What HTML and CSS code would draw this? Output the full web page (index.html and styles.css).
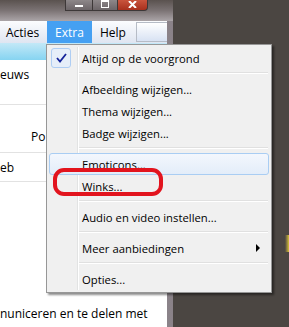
FILE: index.html
```html
<!DOCTYPE html>
<html lang="nl">
<head>
    <meta charset="UTF-8">
    <title>Extra menu</title>
    <link rel="stylesheet" href="styles.css">
</head>
<body>
    <div class="window">
        <div class="titlebar">
            <div class="caption">
                <span class="cbtn min"><i></i></span>
                <span class="cbtn max"><i></i></span>
                <span class="cbtn close">
                    <svg width="9" height="7" viewBox="0 0 9 7"><path d="M1 0 L8 7 M8 0 L1 7" stroke="#fff" stroke-width="2"/></svg>
                </span>
            </div>
        </div>
        <div class="client">
            <div class="menubar">
                <span class="mitem first">Acties</span>
                <span class="mitem open">Extra</span>
                <span class="mitem">Help</span>
                <span class="searchbox"></span>
            </div>
            <div class="band"></div>
            <div class="row r1">euws</div>
            <div class="row r2">Po</div>
            <div class="row r3">eb</div>
            <div class="filler"></div>
            <div class="footer-text">nuniceren en te delen met</div>
        </div>
    </div>

    <div class="glow"></div>

    <div class="menu">
        <div class="item">
            <span class="icon checked">
                <svg width="11" height="10" viewBox="0 0 11 10"><path d="M1 5 L4 8.5 L10 1" fill="none" stroke="#15239a" stroke-width="1.8"/></svg>
            </span>
            <span class="label">Altijd op de voorgrond</span>
        </div>
        <div class="sep"></div>
        <div class="item"><span class="icon"></span><span class="label">Afbeelding wijzigen...</span></div>
        <div class="item"><span class="icon"></span><span class="label">Thema wijzigen...</span></div>
        <div class="item"><span class="icon"></span><span class="label">Badge wijzigen...</span></div>
        <div class="sep"></div>
        <div class="item hover"><span class="icon"></span><span class="label">Emoticons...</span></div>
        <div class="item"><span class="icon"></span><span class="label">Winks...</span></div>
        <div class="sep"></div>
        <div class="item"><span class="icon"></span><span class="label">Audio en video instellen...</span></div>
        <div class="sep"></div>
        <div class="item"><span class="icon"></span><span class="label">Meer aanbiedingen</span><span class="arrow"></span></div>
        <div class="sep"></div>
        <div class="item"><span class="icon"></span><span class="label">Opties...</span></div>
    </div>

    <div class="mark"></div>
</body>
</html>
```

FILE: styles.css
```css
body { margin: 0; width: 289px; height: 327px; overflow: hidden; position: relative; background: #4b4642; font-family: "Open Sans", "DejaVu Sans", sans-serif; font-size: 11.3px; color: #000; }

.window { width: 173px; height: 327px; display: flex; flex-direction: column; background: linear-gradient(90deg, #a8a1a6, #8a8288); }
.titlebar { height: 21px; flex: none; background: linear-gradient(#5a524f, #7b7374 50%, #aba5a8); }
.caption { display: flex; margin-left: 65px; height: 11px; }
.cbtn { height: 11px; box-sizing: border-box; border: 1px solid #3d3838; border-top: none; display: flex; align-items: center; justify-content: center; }
.min, .max { width: 28px; background: linear-gradient(#8d8789, #6c6568); }
.max { width: 25px; border-left: none; }
.min i { display: block; width: 8px; height: 2px; background: #fff; margin-top: 2px; }
.max i { display: block; width: 6px; height: 5px; border: 1px solid #fff; border-top-width: 2px; margin-top: -3px; }
.close { width: 30px; border-left: none; border-radius: 0 0 4px 0; background: linear-gradient(#c9543d, #a8301d); }
.close svg { margin-top: -2px; }

.client { flex: 1; width: 167px; background: #fff; display: flex; flex-direction: column; }
.menubar { height: 22px; flex: none; display: flex; align-items: stretch; background: linear-gradient(#fbfcfe, #dfe5f1); font-size: 12px; }
.mitem { padding: 0 8px; display: flex; align-items: center; }
.mitem.first { padding-left: 6px; }
.mitem.open { background: #45a0f2; color: #fff; }
.searchbox { flex: 1; margin: 1px 0 1px 2px; border: 1px solid #b6bcc6; border-right: none; background: linear-gradient(#ffffff, #d8e2f3); }
.band { height: 17px; flex: none; background: linear-gradient(#c3e8f7, #86d4f1); }
.row { border-bottom: 1px solid #e2e2e2; font-size: 12px; }
.r1 { height: 45px; padding-top: 6px; box-sizing: border-box; }
.r2 { height: 48px; padding: 23px 0 0 31px; box-sizing: border-box; }
.r3 { height: 29px; padding-top: 6px; box-sizing: border-box; }
.filler { flex: 1; }
.footer-text { height: 22px; font-size: 12px; }

.glow { position: absolute; left: 285px; top: 235px; width: 4px; height: 17px; background: linear-gradient(90deg, rgba(216, 193, 58, 0), #d8c13a); }

.menu { position: absolute; left: 46px; top: 44px; width: 226px; box-sizing: border-box; padding: 2px; background: #f0f0f0; border: 1px solid #979797; box-shadow: 2px 2px 2px rgba(0, 0, 0, 0.45); }
.menu::before { content: ""; position: absolute; left: 30px; top: 2px; bottom: 2px; width: 1px; background: #e2e3e3; box-shadow: 1px 0 0 #fff; }
.item { height: 22px; box-sizing: border-box; display: flex; align-items: center; padding-left: 1px; position: relative; border: 1px solid transparent; border-radius: 3px; }
.item.hover { border-color: #a9cdf3; background: linear-gradient(#f3f7fd, #e3edf9); }
.icon { width: 20px; height: 20px; margin-right: 11px; display: flex; align-items: center; justify-content: center; box-sizing: border-box; }
.icon.checked { border: 1px solid #aecdf3; border-radius: 3px; background: #e6eef9; }
.arrow { margin-left: auto; margin-right: 8px; width: 0; height: 0; border-left: 4px solid #000; border-top: 4px solid transparent; border-bottom: 4px solid transparent; }
.sep { height: 1px; margin: 3px 1px 4px 30px; background: #e0e0e0; border-bottom: 1px solid #fff; }

.mark { position: absolute; left: 53px; top: 168px; width: 110px; height: 28px; box-sizing: border-box; border: 4px solid #e2141e; border-radius: 11px; }
```
